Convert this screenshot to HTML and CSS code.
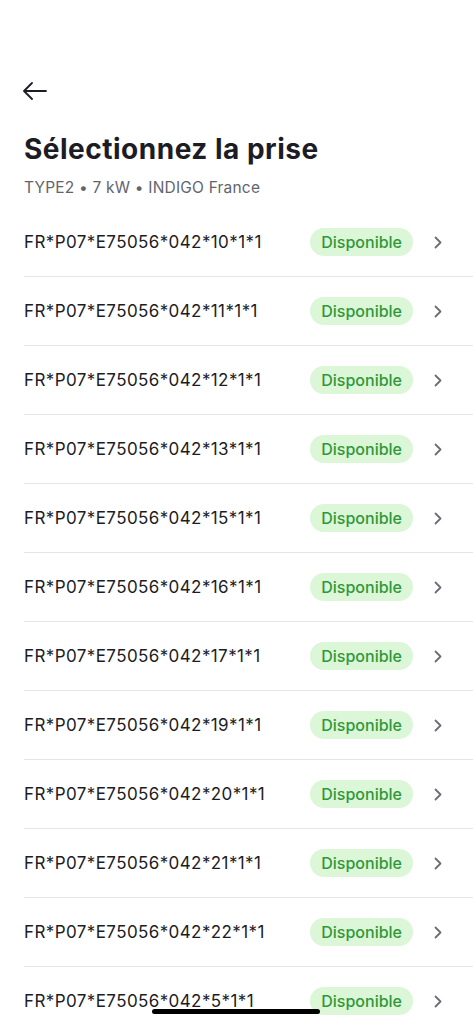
FILE: index.html
```html
<!DOCTYPE html>
<html lang="fr">
<head>
    <meta charset="UTF-8">
    <meta name="viewport" content="width=device-width, initial-scale=1.0">
    <title>Sélectionnez la prise</title>
    <link rel="stylesheet" href="styles.css">
</head>
<body>
    <header class="top">
        <button class="back" aria-label="Retour">
            <svg width="26" height="18" viewBox="0 0 26 18" fill="none" stroke="#1c1c24" stroke-width="1.8" stroke-linecap="round" stroke-linejoin="round">
                <path d="M24 9H2M10 1L2 9l8 8"/>
            </svg>
        </button>
        <h1>Sélectionnez la prise</h1>
        <p class="sub">TYPE2 • 7 kW • INDIGO France</p>
    </header>

    <ul class="plugs" id="plugs"></ul>

    <div class="home-bar"></div>

    <script>
        const ids = ['10', '11', '12', '13', '15', '16', '17', '19', '20', '21', '22', '5'];
        const list = document.getElementById('plugs');
        ids.forEach(id => {
            const li = document.createElement('li');
            li.className = 'plug';
            li.innerHTML = `
                <span class="plug-id">FR*P07*E75056*042*${id}*1*1</span>
                <span class="badge">Disponible</span>
                <svg class="chev" width="8" height="13" viewBox="0 0 8 13" fill="none" stroke="#6b6e78" stroke-width="1.8" stroke-linecap="round" stroke-linejoin="round"><path d="M1.5 1.5l5 5-5 5"/></svg>`;
            list.appendChild(li);
        });
    </script>
</body>
</html>
```

FILE: styles.css
```css
body {
    font-family: Inter, "Noto Sans", sans-serif;
    margin: 0;
    padding: 0;
    background: #fff;
    color: #1c1c24;
}
.top {
    padding: 80px 24px 0;
}
.back {
    display: block;
    background: none;
    border: 0;
    padding: 0;
    margin-left: -2px;
    height: 24px;
}
.top h1 {
    margin: 28px 0 0;
    font-size: 28px;
    font-weight: 700;
    letter-spacing: 0.5px;
    line-height: 34px;
}
.sub {
    margin: 12px 0 0;
    font-size: 15.5px;
    color: #62646d;
    line-height: 20px;
    letter-spacing: 0.2px;
}
.plugs {
    list-style: none;
    margin: 0;
    padding: 10px 0 0 24px;
}
.plug {
    display: flex;
    align-items: center;
    height: 68px;
    border-bottom: 1px solid #e5e5ea;
    padding-right: 31px;
}
.plug-id {
    flex: 1;
    font-size: 17px;
    letter-spacing: 0.4px;
    color: #1c1c24;
}
.badge {
    background: #dcf6d8;
    color: #2f9838;
    font-size: 16px;
    font-weight: 500;
    padding: 0 11px;
    height: 28px;
    line-height: 28px;
    border-radius: 14px;
    margin-right: 21px;
}
.home-bar {
    position: fixed;
    left: 152px;
    bottom: 10px;
    width: 168px;
    height: 5px;
    border-radius: 3px;
    background: #000;
}
```
